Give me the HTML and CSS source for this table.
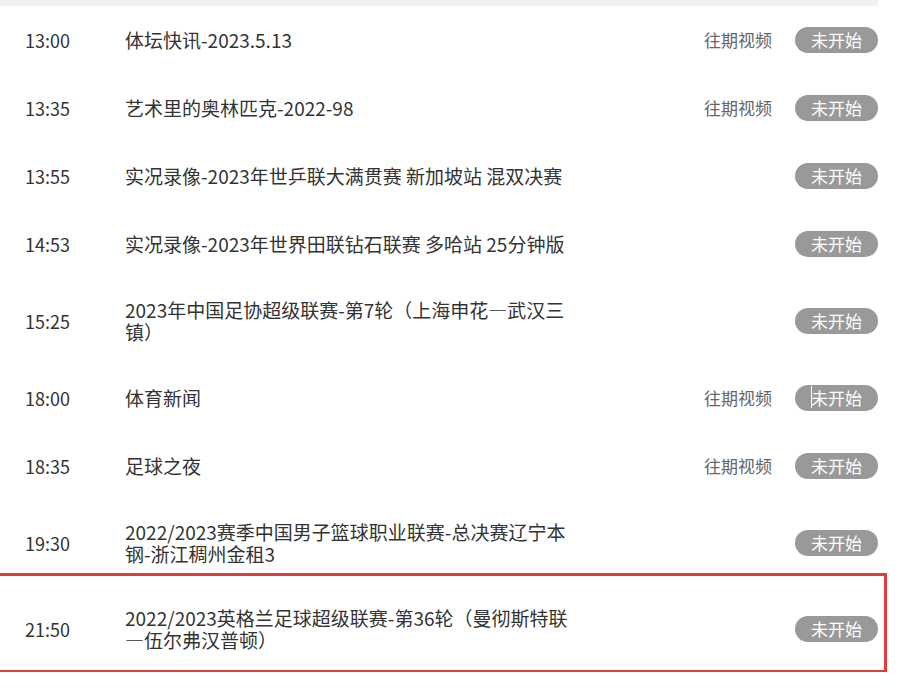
FILE: index.html
```html
<!DOCTYPE html>
<html lang="zh-CN">
<head>
<meta charset="utf-8">
<title>节目单</title>
<link rel="stylesheet" href="styles.css">
</head>
<body>
<div class="schedule">
  <div class="strip"></div>
  <ul class="list">
    <li class="row">
      <span class="time">13:00</span>
      <span class="title">体坛快讯-2023.5.13</span>
      <span class="past">往期视频</span>
      <span class="badge">未开始</span>
    </li>
    <li class="row">
      <span class="time">13:35</span>
      <span class="title">艺术里的奥林匹克-2022-98</span>
      <span class="past">往期视频</span>
      <span class="badge">未开始</span>
    </li>
    <li class="row">
      <span class="time">13:55</span>
      <span class="title">实况录像-2023年世乒联大满贯赛 新加坡站 混双决赛</span>
      <span class="badge">未开始</span>
    </li>
    <li class="row">
      <span class="time">14:53</span>
      <span class="title">实况录像-2023年世界田联钻石联赛 多哈站 25分钟版</span>
      <span class="badge">未开始</span>
    </li>
    <li class="row">
      <span class="time">15:25</span>
      <span class="title">2023年中国足协超级联赛-第7轮（上海申花—武汉三镇）</span>
      <span class="badge">未开始</span>
    </li>
    <li class="row">
      <span class="time">18:00</span>
      <span class="title">体育新闻</span>
      <span class="past">往期视频</span>
      <span class="badge badge-cursor">未开始</span>
    </li>
    <li class="row">
      <span class="time">18:35</span>
      <span class="title">足球之夜</span>
      <span class="past">往期视频</span>
      <span class="badge">未开始</span>
    </li>
    <li class="row">
      <span class="time">19:30</span>
      <span class="title">2022/2023赛季中国男子篮球职业联赛-总决赛辽宁本钢-浙江稠州金租3</span>
      <span class="badge">未开始</span>
    </li>
    <li class="row row-current">
      <span class="time">21:50</span>
      <span class="title">2022/2023英格兰足球超级联赛-第36轮（曼彻斯特联—伍尔弗汉普顿）</span>
      <span class="badge">未开始</span>
    </li>
  </ul>
</div>
</body>
</html>
```
FILE: styles.css
```css
html, body {
  margin: 0;
  padding: 0;
  background: #fff;
}

body {
  font-family: "Noto Sans CJK SC", "Noto Sans", sans-serif;
  color: #333;
}

.schedule {
  width: 878px;
}

.strip {
  height: 6px;
  background: #f1f1f1;
}

.list {
  list-style: none;
  margin: 0;
  padding: 0;
}

.row {
  position: relative;
  display: flex;
  align-items: center;
  box-sizing: border-box;
  min-height: 68px;
  padding: 21px 0 21px 25px;
}

.time {
  width: 100px;
  flex: none;
  font-size: 18px;
  line-height: 22px;
  color: #333;
}

.title {
  width: 450px;
  flex: none;
  font-size: 19px;
  line-height: 22px;
  color: #333;
}

.past {
  margin-left: auto;
  font-size: 17px;
  line-height: 22px;
  color: #666;
}

.badge {
  margin-left: auto;
  flex: none;
  box-sizing: border-box;
  width: 83px;
  height: 26px;
  border-radius: 13px;
  background: #999;
  color: #fff;
  font-size: 17px;
  line-height: 26px;
  text-align: center;
}

.past + .badge {
  margin-left: 23px;
}

.badge-cursor {
  position: relative;
}

.badge-cursor::before {
  content: "";
  position: absolute;
  left: 16px;
  top: 1px;
  width: 1px;
  height: 22px;
  background: #fff;
}

.row-current::after {
  content: "";
  position: absolute;
  left: -7px;
  right: -9px;
  top: -13px;
  bottom: -1px;
  border: 3px solid #e03c3c;
  pointer-events: none;
}
```
